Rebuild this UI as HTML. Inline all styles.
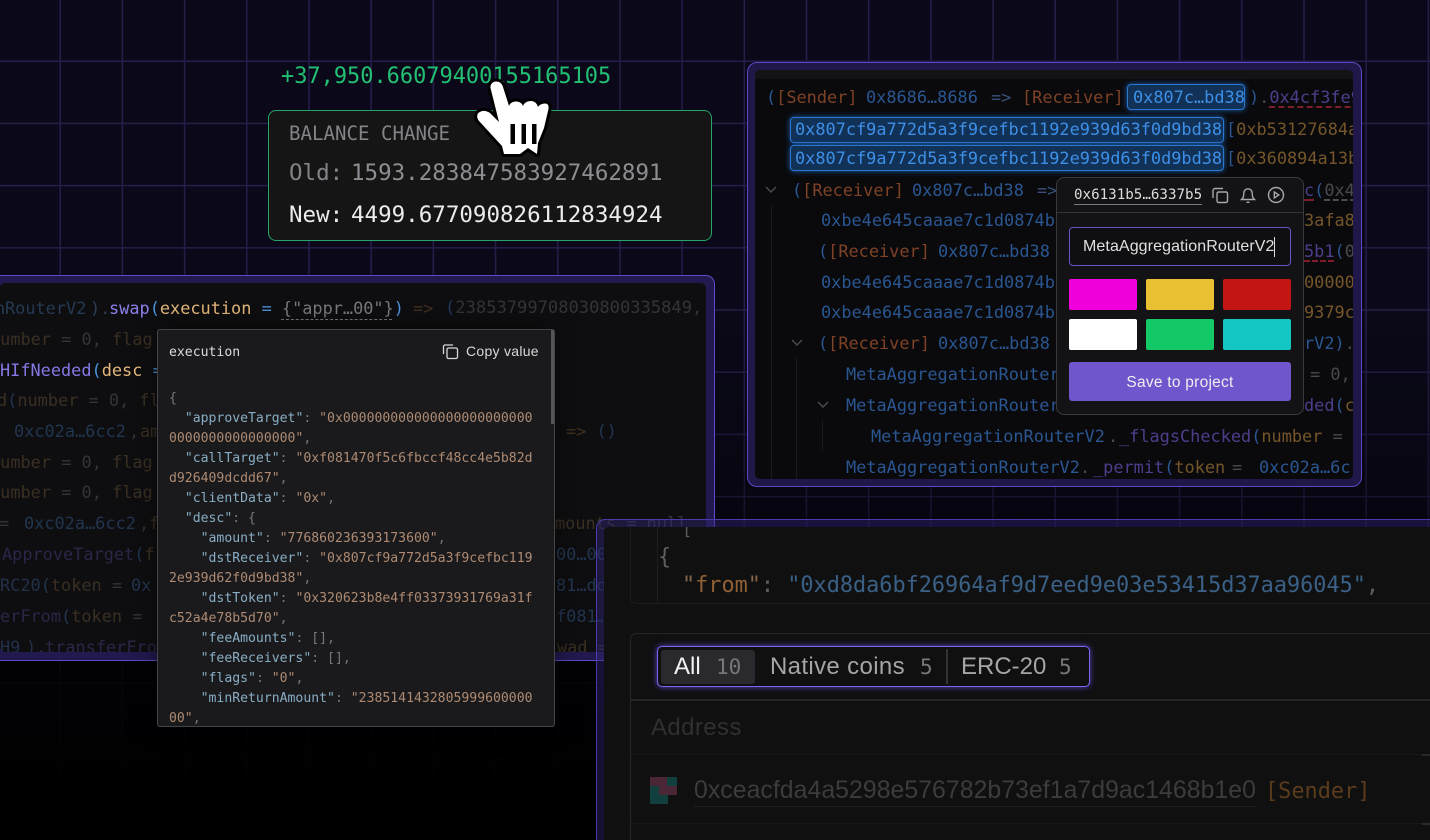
<!DOCTYPE html>
<html><head><meta charset="utf-8"><style>
html,body{margin:0;padding:0;background:#000;overflow:hidden}
#p{position:relative;width:1430px;height:840px;overflow:hidden;background-color:#0b0919;
background-image:linear-gradient(90deg,#241e4a 1.5px,transparent 1.5px),linear-gradient(#241e4a 1.5px,transparent 1.5px);
background-size:62.2px 62.2px;background-position:59.5px 60.5px}
#fade{position:absolute;inset:0;background:linear-gradient(rgba(0,0,0,0) 0,rgba(0,0,0,0) 300px,rgba(0,0,0,.35) 500px,rgba(0,0,0,.78) 640px,rgba(0,0,0,.88) 720px,#000 800px)}
.a{position:absolute}
.l{position:absolute;white-space:pre;font:16.9px/20px "DejaVu Sans Mono","Liberation Mono",monospace}
.t{margin-top:1px}
.s{font-family:"Liberation Sans",sans-serif}
.panel{position:absolute;box-sizing:border-box;border:1px solid #5a44bd;border-radius:9px;background:#221a4f}
.inner{position:absolute;overflow:hidden;border-radius:5px}
.b{color:#2a5691}.o{color:#7f4226}.y{color:#75562a}.g{color:#4a4a4e}.p{color:#4f3d8c}
.bx{position:absolute;box-sizing:border-box;background:#123157;border:1.5px solid #2a78cf;border-radius:4px;box-shadow:0 0 6px #1d5fb0}
.hl{color:#3d8fe6}
.d{color:#3a2f22}.e{color:#33333a}.f{color:#22354f}
.k{color:#88adc4}.v{color:#ae8a72}.m{color:#77777a}
.j{position:absolute;left:169px;white-space:pre;margin-top:2px;font:13.14px/20px "DejaVu Sans Mono","Liberation Mono",monospace}
.sw{position:absolute;border-radius:2px;width:68px;height:31px}
</style></head><body><div id="p"><div id="fade"></div>

<!-- left panel -->
<div class="panel" style="left:-12px;top:275px;width:727px;height:386px;background:#221a4f;border-color:#5f48c9"></div>
<div class="inner" style="left:0;top:283px;width:706px;height:369px;background:#0e0e10">
<div style="position:relative;left:0;top:-283px;height:840px">
<div class="l" style="left:5px;top:298px;color:#253a52">RouterV2</div>
<div class="l" style="left:-5px;top:298px;color:#253a52">n</div>
<div class="l" style="left:90px;top:298px;color:#2e3f55">).</div>
<div class="l" style="left:109px;top:298px"><span style="color:#8a80ea">swap</span><span style="color:#4a92dc">(</span><span style="color:#e3b67a">execution</span> <span style="color:#4a92dc">=</span> <span style="color:#77777c">{"appr…00"}</span><span style="color:#4a92dc">)</span></div>
<div class="a" style="left:281px;top:319px;width:111px;border-top:1px dashed #77777c"></div>
<div class="l" style="left:413px;top:298px;color:#43301f">=&gt;</div>
<div class="l" style="left:445px;top:298px;font-size:17.1px"><span style="color:#1e3a5c">(</span><span class="e">23853799708030800335849,</span></div>
<div class="l d" style="left:-10px;top:329px">number <span class="e">=</span> <span class="e">0,</span> flag</div>
<div class="l" style="left:0;top:360px"><span style="color:#8478e4">HIfNeeded</span><span style="color:#4a92dc">(</span><span style="color:#e3b67a">desc</span> <span style="color:#4a92dc">=</span></div>
<div class="l d" style="left:-3px;top:390px">d<span class="f">(</span>number <span class="e">=</span> <span class="e">0,</span> fl</div>
<div class="l f" style="left:14px;top:421px">0xc02a…6cc2</div>
<div class="l e" style="left:129px;top:421px">,</div>
<div class="l d" style="left:140px;top:421px">am</div>
<div class="l" style="left:566px;top:421px"><span style="color:#43301f">=&gt;</span> <span class="f">()</span></div>
<div class="l d" style="left:-10px;top:452px">number <span class="e">=</span> <span class="e">0,</span> flag</div>
<div class="l d" style="left:-10px;top:482px">number <span class="e">=</span> <span class="e">0,</span> flag</div>
<div class="l e" style="left:-1px;top:513px">=</div>
<div class="l f" style="left:24px;top:513px">0xc02a…6cc2</div>
<div class="l e" style="left:139px;top:513px">,</div>
<div class="l d" style="left:149px;top:513px">f</div>
<div class="l d" style="left:555px;top:513px">mounts <span class="e">=</span> <span class="e">null</span></div>
<div class="l" style="left:2px;top:544px"><span style="color:#2b2648">ApproveTarget</span><span class="f">(</span><span class="d">fr</span></div>
<div class="l f" style="left:556px;top:544px">00…000</div>
<div class="l" style="left:0;top:575px"><span style="color:#23304a">RC20</span><span class="f">(</span><span class="d">token</span> <span class="e">=</span></div>
<div class="l f" style="left:131px;top:575px">0x</div>
<div class="l f" style="left:556px;top:575px">81…dd</div>
<div class="l" style="left:0;top:606px"><span style="color:#2b2648">erFrom</span><span class="f">(</span><span class="d">token</span> <span class="e">=</span></div>
<div class="l f" style="left:556px;top:606px">f081…</div>
<div class="l" style="left:0;top:637px;color:#23304a">H9</div>
<div class="l" style="left:26px;top:637px;color:#23304a">).</div>
<div class="l" style="left:45px;top:637px;color:#2b2648">transferFro</div>
<div class="l d" style="left:557px;top:637px">wad <span class="e">=</span></div>
</div></div>

<!-- JSON popup -->
<div class="a" style="left:157px;top:329px;width:398px;height:398px;box-sizing:border-box;background:#1a1a1c;border:1px solid #454547;border-radius:3px;box-shadow:0 0 24px rgba(0,0,0,.5)"></div>
<div class="a" style="left:551px;top:330px;width:3px;height:94px;background:#555557"></div>
<div class="j" style="top:341px;color:#dcdcdc">execution</div>
<svg class="a" style="left:442px;top:343px" width="17" height="17" viewBox="0 0 17 17" fill="none" stroke="#d8d8d8" stroke-width="1.3"><rect x="5" y="5" width="10.5" height="10.5" rx="1.5"/><path d="M11 2H3a1.5 1.5 0 0 0-1.5 1.5V11"/></svg>
<div class="a s" style="left:466px;top:342px;font-size:14px;line-height:18px;color:#d8d8d8;white-space:pre;letter-spacing:.28px">Copy value</div>
<div class="j m" style="top:387px">{</div>
<div class="j" style="top:407px">  <span class="k">"approveTarget"</span><span class="m">:</span> <span class="v">"0x000000000000000000000000</span></div>
<div class="j" style="top:427px"><span class="v">0000000000000000"</span><span class="m">,</span></div>
<div class="j" style="top:447px">  <span class="k">"callTarget"</span><span class="m">:</span> <span class="v">"0xf081470f5c6fbccf48cc4e5b82d</span></div>
<div class="j" style="top:467px"><span class="v">d926409dcdd67"</span><span class="m">,</span></div>
<div class="j" style="top:487px">  <span class="k">"clientData"</span><span class="m">:</span> <span class="v">"0x"</span><span class="m">,</span></div>
<div class="j" style="top:507px">  <span class="k">"desc"</span><span class="m">: {</span></div>
<div class="j" style="top:527px">    <span class="k">"amount"</span><span class="m">:</span> <span class="v">"776860236393173600"</span><span class="m">,</span></div>
<div class="j" style="top:547px">    <span class="k">"dstReceiver"</span><span class="m">:</span> <span class="v">"0x807cf9a772d5a3f9cefbc119</span></div>
<div class="j" style="top:567px"><span class="v">2e939d62f0d9bd38"</span><span class="m">,</span></div>
<div class="j" style="top:587px">    <span class="k">"dstToken"</span><span class="m">:</span> <span class="v">"0x320623b8e4ff03373931769a31f</span></div>
<div class="j" style="top:607px"><span class="v">c52a4e78b5d70"</span><span class="m">,</span></div>
<div class="j" style="top:627px">    <span class="k">"feeAmounts"</span><span class="m">: [],</span></div>
<div class="j" style="top:647px">    <span class="k">"feeReceivers"</span><span class="m">: [],</span></div>
<div class="j" style="top:667px">    <span class="k">"flags"</span><span class="m">:</span> <span class="v">"0"</span><span class="m">,</span></div>
<div class="j" style="top:687px">    <span class="k">"minReturnAmount"</span><span class="m">:</span> <span class="v">"2385141432805999600000</span></div>
<div class="j" style="top:707px"><span class="v">00"</span><span class="m">,</span></div>

<!-- balance -->
<div class="l t" style="left:281px;top:64px;font-size:21.95px;line-height:24px;color:#22c073">+37,950.66079400155165105</div>
<div class="a" style="left:268px;top:110px;width:444px;height:131px;box-sizing:border-box;background:#151516;border:1.5px solid #27a468;border-radius:8px"></div>
<div class="l t" style="left:289px;top:121px;font-size:19.1px;line-height:24px;color:#838388">BALANCE CHANGE</div>
<div class="l t" style="left:289px;top:160px;font-size:22.5px;line-height:24px;color:#838388">Old:</div>
<div class="l t" style="left:351px;top:160px;font-size:22.5px;line-height:24px;color:#8e8e92">1593.283847583927462891</div>
<div class="l t" style="left:289px;top:202px;font-size:22.5px;line-height:24px;color:#ececec">New:</div>
<div class="l t" style="left:351px;top:202px;font-size:22.5px;line-height:24px;color:#ececec">4499.677090826112834924</div>

<!-- right panel -->
<div class="panel" style="left:747px;top:62px;width:615px;height:425px;border-radius:10px;border-color:#5c46c4;background:#1f1848"></div>
<div class="inner" style="left:755px;top:70px;width:598px;height:409px;background:#0a0a0c">
<div class="a" style="left:0;top:0;width:598px;height:9px;background:#131315"></div>
<div style="position:relative;left:-755px;top:-70px;height:840px;width:1430px">
<div class="a" style="left:771px;top:205px;width:1px;height:280px;background:#1a1a1d"></div>
<div class="a" style="left:796px;top:358px;width:1px;height:125px;background:#1a1a1d"></div>
<div class="a" style="left:822px;top:420px;width:1px;height:31px;background:#1a1a1d"></div>
<div class="l" style="left:766px;top:87px"><span class="b">(</span><span class="o">[Sender]</span></div>
<div class="l b" style="left:866px;top:87px">0x8686…8686</div>
<div class="l" style="left:991px;top:87px;color:#39517a">=&gt;</div>
<div class="l o" style="left:1022px;top:87px">[Receiver]</div>
<div class="bx" style="left:1127px;top:84px;width:118px;height:26px"></div>
<div class="l hl" style="left:1133px;top:87px">0x807c…bd38</div>
<div class="l" style="left:1249px;top:87px"><span class="b">)</span><span class="g">.</span><span class="p" style="text-decoration:underline dashed #8e2230;text-underline-offset:4px">0x4cf3fe9</span></div>
<div class="bx" style="left:790px;top:117px;width:434px;height:26px"></div>
<div class="l hl" style="left:795px;top:119px">0x807cf9a772d5a3f9cefbc1192e939d63f0d9bd38</div>
<div class="l" style="left:1226px;top:119px"><span class="b">[</span><span class="y">0xb53127684a</span></div>
<div class="bx" style="left:790px;top:145px;width:434px;height:26px"></div>
<div class="l hl" style="left:795px;top:148px">0x807cf9a772d5a3f9cefbc1192e939d63f0d9bd38</div>
<div class="l" style="left:1226px;top:148px"><span class="b">[</span><span class="y">0x360894a13b</span></div>
<svg class="a" style="left:764px;top:184px" width="14" height="12" fill="none" stroke="#4a4a4e" stroke-width="1.5"><path d="M2 3l5 5 5-5"/></svg>
<div class="l" style="left:792px;top:180px"><span class="b">(</span><span class="o">[Receiver]</span></div>
<div class="l b" style="left:912px;top:180px">0x807c…bd38</div>
<div class="l" style="left:1037px;top:180px;color:#39517a">=&gt;</div>
<div class="l" style="left:1304px;top:180px"><span class="p" style="text-decoration:underline dashed #8e2230;text-underline-offset:4px">c</span><span class="b">(</span><span class="g" style="text-decoration:underline dashed #555;text-underline-offset:4px">0x4c</span></div>
<div class="l b" style="left:821px;top:210px">0xbe4e645caaae7c1d0874b</div>
<div class="l y" style="left:1304px;top:210px">3afa8</div>
<div class="l" style="left:818px;top:241px"><span class="b">(</span><span class="o">[Receiver]</span></div>
<div class="l b" style="left:938px;top:241px">0x807c…bd38</div>
<div class="l" style="left:1304px;top:241px"><span class="p" style="text-decoration:underline dashed #8e2230;text-underline-offset:4px">5b1</span><span class="b">(</span><span class="g">0</span></div>
<div class="l b" style="left:821px;top:272px">0xbe4e645caaae7c1d0874b</div>
<div class="l y" style="left:1304px;top:272px">00000</div>
<div class="l b" style="left:821px;top:302px">0xbe4e645caaae7c1d0874b</div>
<div class="l y" style="left:1304px;top:302px">9379c</div>
<svg class="a" style="left:790px;top:337px" width="14" height="12" fill="none" stroke="#4a4a4e" stroke-width="1.5"><path d="M2 3l5 5 5-5"/></svg>
<div class="l" style="left:818px;top:333px"><span class="b">(</span><span class="o">[Receiver]</span></div>
<div class="l b" style="left:938px;top:333px">0x807c…bd38</div>
<div class="l b" style="left:1304px;top:333px">rV2)<span class="g">.</span></div>
<div class="l b" style="left:846px;top:364px">MetaAggregationRouter</div>
<div class="l g" style="left:1310px;top:364px">= 0,</div>
<svg class="a" style="left:816px;top:399px" width="14" height="12" fill="none" stroke="#4a4a4e" stroke-width="1.5"><path d="M2 3l5 5 5-5"/></svg>
<div class="l b" style="left:846px;top:395px">MetaAggregationRouter</div>
<div class="l" style="left:1304px;top:395px"><span class="p">ded</span><span class="b">(</span><span class="y">c</span></div>
<div class="l b" style="left:871px;top:426px">MetaAggregationRouterV2</div>
<div class="l g" style="left:1108px;top:426px">.</div>
<div class="l" style="left:1119px;top:426px"><span class="p">_flagsChecked</span><span class="b">(</span><span class="y">number</span> <span class="g">=</span></div>
<div class="l b" style="left:846px;top:457px">MetaAggregationRouterV2</div>
<div class="l g" style="left:1080px;top:457px">.</div>
<div class="l" style="left:1093px;top:457px"><span class="p">_permit</span><span class="b">(</span><span class="y">token</span></div>
<div class="l g" style="left:1232px;top:457px">=</div>
<div class="l b" style="left:1259px;top:457px">0xc02a…6c</div>
</div></div>

<!-- label popup -->
<div class="a" style="left:1056px;top:177px;width:248px;height:238px;box-sizing:border-box;background:#131315;border:1px solid #3a3a3c;border-radius:8px"></div>
<div class="a" style="left:1057px;top:212px;width:246px;height:1px;background:#353537"></div>
<div class="l t" style="left:1074px;top:186px;font-size:14.2px;color:#dcdcdc;border-bottom:1px solid #7a7a7a;line-height:17px">0x6131b5…6337b5</div>
<svg class="a" style="left:1211px;top:186px" width="18" height="18" fill="none" stroke="#a8a8aa" stroke-width="1.4"><rect x="6" y="6" width="10.5" height="10.5" rx="1.5"/><path d="M12 2.5H4A2 2 0 0 0 2 4.500V12"/></svg>
<svg class="a" style="left:1239px;top:186px" width="18" height="18" fill="none" stroke="#a8a8aa" stroke-width="1.4"><path d="M2.500 13.500h13c-1.500-1.500-2.300-2.500-2.300-6.500a4.200 4.200 0 0 0-8.400 0c0 4-.8 5-2.300 6.500zM7.500 16.300h3"/></svg>
<svg class="a" style="left:1267px;top:186px" width="18" height="18" fill="none" stroke="#a8a8aa" stroke-width="1.4"><circle cx="9" cy="9" r="7.500"/><path d="M7.300 6l4.500 3-4.500 3z"/></svg>
<div class="a" style="left:1069px;top:227px;width:222px;height:39px;box-sizing:border-box;border:1px solid #6a54c8;border-radius:4px;background:#0f0f11"></div>
<div class="a s" style="left:1083px;top:237px;font-size:16px;line-height:20px;color:#e0e0e0;white-space:pre;letter-spacing:.09px">MetaAggregationRouterV2</div>
<div class="a" style="left:1274px;top:237px;width:1px;height:20px;background:#ddd"></div>
<div class="sw" style="left:1069px;top:279px;background:#f000da"></div>
<div class="sw" style="left:1146px;top:279px;background:#e8c032"></div>
<div class="sw" style="left:1223px;top:279px;background:#c41515"></div>
<div class="sw" style="left:1069px;top:319px;background:#fff"></div>
<div class="sw" style="left:1146px;top:319px;background:#14c868"></div>
<div class="sw" style="left:1223px;top:319px;background:#14c6c4"></div>
<div class="a s" style="left:1069px;top:362px;width:222px;height:39px;background:#6f56cc;border-radius:3px;text-align:center;font-size:15.5px;line-height:41px;letter-spacing:.25px;color:#eee">Save to project</div>

<!-- bottom panel -->
<div class="a" style="left:596px;top:519px;width:834px;height:321px;box-sizing:border-box;border:1px solid #4d3aa8;border-right:0;border-bottom:0;border-radius:9px 0 0 0;background:rgba(50,38,125,.42)"></div>
<div class="inner" style="left:604px;top:527px;width:826px;height:313px;background:#101011;border-radius:5px 0 0 0">
<div style="position:relative;left:-604px;top:-527px;width:1430px;height:840px">
<div class="a" style="left:630px;top:515px;width:820px;height:89px;box-sizing:border-box;border:1px solid #1c1c1e;border-radius:6px"></div>
<div class="a" style="left:657px;top:520px;width:1px;height:84px;background:#1f1f21"></div>
<div class="l" style="left:682px;top:520px;font-size:17px;color:#5a5a5c">[</div>
<div class="l t" style="left:658px;top:545px;font-size:21.85px;line-height:24px;color:#5f5f60">{</div>
<div class="l t" style="left:682px;top:573px;font-size:21.85px;line-height:24px"><span style="color:#856648">"</span><span style="color:#8e6034">from</span><span style="color:#856648">"</span><span style="color:#5f5f60">:</span> <span style="color:#3a6086">"0xd8da6bf26964af9d7eed9e03e53415d37aa96045"</span><span style="color:#5f5f60">,</span></div>
<div class="a" style="left:630px;top:633px;width:820px;height:260px;box-sizing:border-box;border:1px solid #252527;border-radius:6px"></div>
<div class="a" style="left:630px;top:699px;width:800px;height:1.500px;background:#252527"></div>
<div class="a" style="left:631px;top:754px;width:800px;height:1px;background:#18181a"></div>
<div class="a" style="left:631px;top:823px;width:800px;height:1px;background:#18181a"></div>
<div class="a" style="left:1422px;top:754px;width:8px;height:2px;background:#2a2a2c"></div>
<div class="a" style="left:1422px;top:823px;width:8px;height:2px;background:#2a2a2c"></div>
<div class="a" style="left:657px;top:646px;width:433px;height:41px;box-sizing:border-box;border:1.500px solid #7c66ee;border-radius:5px;box-shadow:0 0 6px #5a45c8;background:#101011"></div>
<div class="a" style="left:661px;top:650px;width:94px;height:34px;background:#2a2a2e;border-radius:3px"></div>
<div class="a s" style="left:674px;top:652px;font-size:24px;line-height:30px;color:#f2f2f2">All</div>
<div class="l t" style="left:716px;top:651px;font-size:21px;line-height:30px;color:#77777a">10</div>
<div class="a s" style="left:770px;top:652px;font-size:24px;line-height:30px;color:#a5a5a8;white-space:pre;letter-spacing:.35px">Native coins</div>
<div class="l t" style="left:920px;top:651px;font-size:21px;line-height:30px;color:#77777a">5</div>
<div class="a" style="left:946px;top:649px;width:1.500px;height:35px;background:#333336"></div>
<div class="a s" style="left:961px;top:652px;font-size:24px;line-height:30px;color:#a5a5a8;white-space:pre">ERC-20</div>
<div class="l t" style="left:1059px;top:651px;font-size:21px;line-height:30px;color:#77777a">5</div>
<div class="a s" style="left:651px;top:713px;font-size:24px;line-height:30px;color:#303032;letter-spacing:.4px">Address</div>
<svg class="a" style="left:650px;top:777px" width="27" height="27" shape-rendering="crispEdges"><rect width="27" height="27" fill="#113f3e"/><rect width="17" height="9" fill="#4a2636"/><rect x="9" y="9" width="18" height="9" fill="#4a2636"/><rect x="18" y="18" width="9" height="9" fill="#101011"/></svg>
<div class="a s" style="left:694px;top:776px;font-size:24.8px;line-height:30px;color:#3c3c3e;white-space:pre;letter-spacing:.05px">0xceacfda4a5298e576782b73ef1a7d9ac1468b1e0</div>
<div class="a" style="left:694px;top:806px;width:563px;height:1px;background:#1f1f21"></div>
<div class="l t" style="left:1265px;top:779px;font-size:21.9px;line-height:24px;color:#5a3c1c">[Sender]</div>
</div></div>

<!-- cursor -->
<svg class="a" style="left:465px;top:70px" width="95" height="95" viewBox="465 70 95 95">
<path d="M490.500 88C490 84 493 81.500 496 81.500C499 81.500 502 83 503 87L509 106C510 103 513 101.500 516 101.500C519 101.500 522 103 523 106C524 103 527 101 531 101C534 101 537 103 538 107C539 105 542 103.500 545 103.500C548 103.500 549 106 548.500 109L544 128L538 143L537 154L528 148L520 154L504 154L502 146L479 121C476 117 477 113 480 112C483 110 487 111 490 113L499 122Z" fill="#fff" stroke="#000" stroke-width="6" stroke-linejoin="round" paint-order="stroke"/>
<rect x="510.500" y="124" width="4.500" height="20" fill="#000"/><rect x="521.500" y="124" width="4.500" height="20" fill="#000"/><rect x="532" y="124" width="4.500" height="20" fill="#000"/>
</svg>
</div></body></html>
